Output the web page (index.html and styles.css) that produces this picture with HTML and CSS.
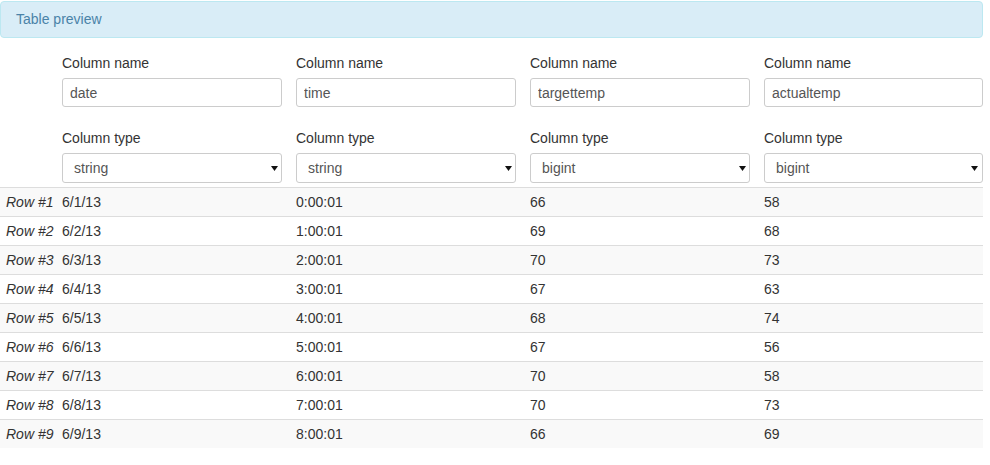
FILE: index.html
```html
<!DOCTYPE html>
<html>
<head>
<meta charset="utf-8">
<link rel="stylesheet" href="styles.css">
</head>
<body>
<div class="panel-heading">Table preview</div>
<table class="preview">
  <thead>
    <tr class="names">
      <th class="rowlabel"></th>
      <th><label>Column name</label><input class="field" type="text" value="date"></th>
      <th><label>Column name</label><input class="field" type="text" value="time"></th>
      <th><label>Column name</label><input class="field" type="text" value="targettemp"></th>
      <th class="last"><label>Column name</label><input class="field" type="text" value="actualtemp"></th>
    </tr>
    <tr class="types">
      <th class="rowlabel"></th>
      <th><label>Column type</label><span class="sel"><select class="field"><option>string</option></select><svg class="caret" width="7" height="5" viewBox="0 0 7 5"><path d="M0 0h7L3.5 5z" fill="#111"/></svg></span></th>
      <th><label>Column type</label><span class="sel"><select class="field"><option>string</option></select><svg class="caret" width="7" height="5" viewBox="0 0 7 5"><path d="M0 0h7L3.5 5z" fill="#111"/></svg></span></th>
      <th><label>Column type</label><span class="sel"><select class="field"><option>bigint</option></select><svg class="caret" width="7" height="5" viewBox="0 0 7 5"><path d="M0 0h7L3.5 5z" fill="#111"/></svg></span></th>
      <th class="last"><label>Column type</label><span class="sel"><select class="field"><option>bigint</option></select><svg class="caret" width="7" height="5" viewBox="0 0 7 5"><path d="M0 0h7L3.5 5z" fill="#111"/></svg></span></th>
    </tr>
  </thead>
  <tbody>
    <tr><th>Row #1</th><td>6/1/13</td><td>0:00:01</td><td>66</td><td>58</td></tr>
    <tr><th>Row #2</th><td>6/2/13</td><td>1:00:01</td><td>69</td><td>68</td></tr>
    <tr><th>Row #3</th><td>6/3/13</td><td>2:00:01</td><td>70</td><td>73</td></tr>
    <tr><th>Row #4</th><td>6/4/13</td><td>3:00:01</td><td>67</td><td>63</td></tr>
    <tr><th>Row #5</th><td>6/5/13</td><td>4:00:01</td><td>68</td><td>74</td></tr>
    <tr><th>Row #6</th><td>6/6/13</td><td>5:00:01</td><td>67</td><td>56</td></tr>
    <tr><th>Row #7</th><td>6/7/13</td><td>6:00:01</td><td>70</td><td>58</td></tr>
    <tr><th>Row #8</th><td>6/8/13</td><td>7:00:01</td><td>70</td><td>73</td></tr>
    <tr><th>Row #9</th><td>6/9/13</td><td>8:00:01</td><td>66</td><td>69</td></tr>
  </tbody>
</table>
</body>
</html>
```
FILE: styles.css
```css
html, body {
  margin: 0;
  padding: 0;
  background: #fff;
}
body {
  font-family: "Liberation Sans", Arial, sans-serif;
  font-size: 14px;
  color: #333;
  padding-top: 1px;
}
.panel-heading {
  width: 951px;
  padding: 9px 15px;
  line-height: 17px;
  background: #d9edf7;
  border: 1px solid #bce8f1;
  border-radius: 4px;
  color: #4a83a8;
}
.preview {
  width: 983px;
  border-collapse: collapse;
  table-layout: fixed;
}
.preview th,
.preview td {
  padding: 5px;
  text-align: left;
  font-weight: normal;
  line-height: 18px;
  vertical-align: top;
  white-space: nowrap;
}
.preview thead th {
  padding: 0 5px;
  width: 224px;
}
.preview thead th.rowlabel { width: 47px; }
.preview thead th.last { width: 219px; padding-right: 0; }
.names th { padding-top: 15px !important; }
.types th { padding-top: 21px !important; padding-bottom: 4px !important; }
label {
  display: block;
  line-height: 20px;
  margin-bottom: 5px;
  color: #333;
}
.field {
  box-sizing: border-box;
  width: 220px;
  height: 29px;
  margin: 0;
  padding: 0 7px;
  font-family: "Liberation Sans", Arial, sans-serif;
  font-size: 14px;
  color: #555;
  background: #fff;
  border: 1px solid #ccc;
  border-radius: 3px;
  outline: none;
  display: block;
}
.last .field { width: 219px; }
.sel {
  position: relative;
  display: block;
}
select.field {
  -webkit-appearance: none;
  appearance: none;
  height: 30px;
  padding: 0 11px;
}
.caret {
  position: absolute;
  right: 8px;
  top: 13px;
}
.last .caret { right: 5px; }
.preview tbody th,
.preview tbody td {
  border-top: 1px solid #ddd;
}
.preview tbody th {
  font-style: italic;
  padding-left: 6px;
  padding-right: 4px;
}
.preview tbody tr:nth-child(odd) {
  background: #f9f9f9;
}
```
